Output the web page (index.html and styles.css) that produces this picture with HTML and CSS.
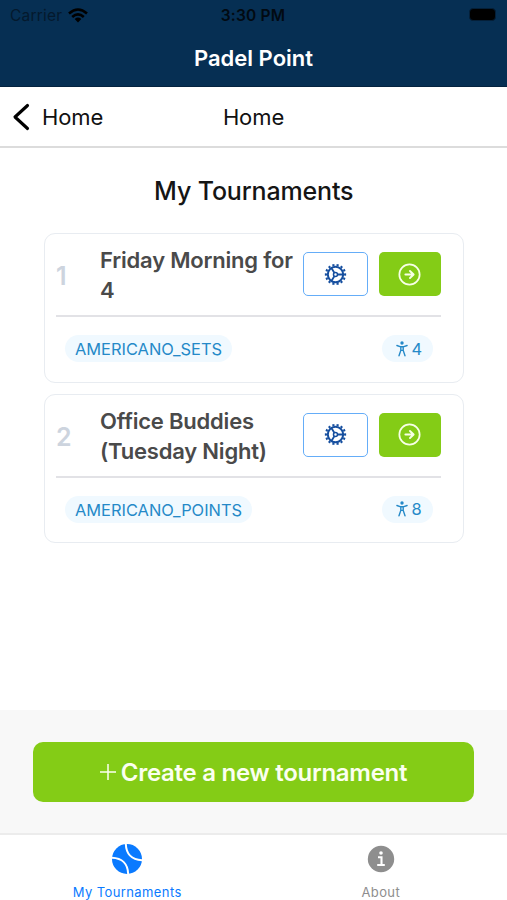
FILE: index.html
```
<!DOCTYPE html>
<html lang="en">
  <head>
    <meta charset="UTF-8" />
    <meta name="viewport" content="width=device-width, initial-scale=1.0" />
    <title>Padel Point</title>
    <link rel="stylesheet" href="styles.css">
  </head>

  <body>
    <svg class="symbols" aria-hidden="true">
      <symbol id="gear" viewBox="-12 -12 24 24">
        <g fill="none" stroke="currentColor">
          <circle r="8" stroke-width="2.1" />
          <circle r="10" stroke-width="2.2" pathLength="28" stroke-dasharray="1 1" stroke-dashoffset="0.5" />
          <circle r="2.1" stroke-width="1.6" />
          <path d="M2.2 0H8M-1.2 -1.9L-4.3 -6.8M-1.2 1.9L-4.3 6.8" stroke-width="1.9" />
        </g>
      </symbol>
      <symbol id="arrow" viewBox="0 0 24 24">
        <g fill="none" stroke="currentColor" stroke-linecap="round" stroke-linejoin="round">
          <circle cx="12" cy="12" r="10.6" stroke-width="1.8" />
          <path d="M7.7 12h8.2M12.5 8.3l3.8 3.7-3.8 3.7" stroke-width="2" />
        </g>
      </symbol>
      <symbol id="person" viewBox="0 0 12 16">
        <circle cx="6" cy="2" r="1.7" fill="currentColor" />
        <path d="M0.9 4.5L4.8 5.8V9.4L3 14.8M11.1 4.5L7.2 5.8V9.4L9 14.8M4.8 5.8H7.2M4.8 9.4H7.2" fill="none" stroke="currentColor" stroke-width="1.4" stroke-linecap="round" stroke-linejoin="round" />
      </symbol>
    </svg>

    <div class="app">
      <header class="header">
        <div class="status">
          <div class="carrier">
            <span>Carrier</span>
            <svg class="wifi" viewBox="0 0 20 15">
              <g fill="none" stroke="currentColor" stroke-width="2.6">
                <path d="M1 5.5Q10 -2.5 19 5.5" />
                <path d="M4.2 9Q10 3.8 15.8 9" />
              </g>
              <path d="M6.7 11Q10 8.2 13.3 11L10 14.5Z" fill="currentColor" />
            </svg>
          </div>
          <span class="time">3:30 PM</span>
          <div class="battery-wrap"><div class="battery"></div></div>
        </div>
        <div class="app-title">Padel Point</div>
      </header>

      <nav class="nav">
        <a class="back">
          <svg class="chevron" viewBox="0 0 18 28">
            <path d="M15.5 2.5L3 14l12.5 11.5" fill="none" stroke="currentColor" stroke-width="3.1" stroke-linecap="round" stroke-linejoin="round" />
          </svg>
          <span>Home</span>
        </a>
        <span class="nav-title">Home</span>
      </nav>

      <main class="main">
        <h1 class="heading">My Tournaments</h1>

        <div class="card">
          <div class="card-top">
            <span class="number">1</span>
            <h2 class="name">Friday Morning for 4</h2>
            <button class="btn btn-settings"><svg class="btn-icon"><use href="#gear" /></svg></button>
            <button class="btn btn-open"><svg class="btn-icon"><use href="#arrow" /></svg></button>
          </div>
          <div class="card-bottom">
            <span class="badge">AMERICANO_SETS</span>
            <span class="badge badge-players"><svg class="person"><use href="#person" /></svg>4</span>
          </div>
        </div>

        <div class="card">
          <div class="card-top">
            <span class="number">2</span>
            <h2 class="name">Office Buddies (Tuesday Night)</h2>
            <button class="btn btn-settings"><svg class="btn-icon"><use href="#gear" /></svg></button>
            <button class="btn btn-open"><svg class="btn-icon"><use href="#arrow" /></svg></button>
          </div>
          <div class="card-bottom">
            <span class="badge">AMERICANO_POINTS</span>
            <span class="badge badge-players"><svg class="person"><use href="#person" /></svg>8</span>
          </div>
        </div>
      </main>

      <div class="actions">
        <button class="create">
          <svg class="plus" viewBox="0 0 16 16">
            <path d="M8 0v16M0 8h16" stroke="currentColor" stroke-width="1.5" />
          </svg>
          <span>Create a new tournament</span>
        </button>
      </div>

      <div class="tabs">
        <a class="tab tab-active">
          <svg class="tab-icon" viewBox="0 0 30 30">
            <circle cx="15" cy="15" r="15" fill="currentColor" />
            <path d="M13.8 -1C13.8 9 19 16.2 31 16.2M-1 13.8C10 13.8 16.2 20 16.2 31" fill="none" stroke="#fff" stroke-width="2" />
          </svg>
          <span>My Tournaments</span>
        </a>
        <a class="tab">
          <svg class="tab-icon" viewBox="0 0 30 30">
            <circle cx="15" cy="15" r="13.2" fill="currentColor" />
            <circle cx="15" cy="9" r="1.8" fill="#fff" />
            <path d="M12 13.2h3.5v7.6M11.2 21h7.6" fill="none" stroke="#fff" stroke-width="2.1" />
          </svg>
          <span>About</span>
        </a>
      </div>
    </div>
  </body>
</html>
```
FILE: styles.css
```
* {
  box-sizing: border-box;
}
body {
  margin: 0;
  font-family: Inter, "Liberation Sans", sans-serif;
  background-color: white;
}
.symbols {
  display: none;
}
svg {
  display: block;
  flex-shrink: 0;
}
button {
  font-family: inherit;
  padding: 0;
  border: none;
}
.app {
  height: 900px;
  display: flex;
  flex-direction: column;
  overflow: hidden;
}

.header {
  height: 87px;
  flex-shrink: 0;
  background-color: #062f53;
  border-bottom: 1px solid #04233f;
}
.status {
  height: 29px;
  padding: 1px 11px 0 10px;
  display: grid;
  grid-template-columns: 1fr auto 1fr;
  align-items: center;
  font-size: 15.5px;
  color: #020a12;
}
.carrier {
  display: flex;
  align-items: center;
  gap: 6px;
  letter-spacing: 0.2px;
  color: #04192d;
}
.wifi {
  width: 20px;
  height: 15px;
  color: black;
}
.time {
  font-weight: 600;
  letter-spacing: 0.2px;
}
.battery-wrap {
  display: flex;
  justify-content: flex-end;
}
.battery {
  width: 27px;
  height: 13px;
  margin-top: -2px;
  border: 1px solid #041f38;
  border-radius: 4px;
  background-color: black;
}
.app-title {
  padding-top: 14px;
  line-height: 30px;
  text-align: center;
  font-size: 22px;
  font-weight: 600;
  color: white;
}

.nav {
  height: 61px;
  flex-shrink: 0;
  display: grid;
  grid-template-columns: 1fr auto 1fr;
  align-items: center;
  padding: 0 12px;
  border-bottom: 2px solid #dcdcdc;
  font-size: 22px;
  letter-spacing: -0.1px;
  color: #111;
}
.back {
  display: flex;
  align-items: center;
  gap: 12px;
}
.chevron {
  width: 18px;
  height: 28px;
  color: black;
}

.main {
  flex: 1;
  padding: 27px 43.5px 0 44px;
}
.heading {
  margin: 0 0 26px;
  line-height: 32px;
  text-align: center;
  font-size: 25px;
  font-weight: 500;
  letter-spacing: -0.15px;
  color: #151515;
}
.card {
  height: 149.5px;
  margin-bottom: 11px;
  padding: 12px 22px 0 11px;
  border: 1.5px solid #e8ecf1;
  border-radius: 11px;
}
.card-top {
  height: 71px;
  display: flex;
  border-bottom: 2px solid #e2e2e6;
}
.number {
  width: 44px;
  padding-top: 14px;
  line-height: 32px;
  font-size: 25px;
  font-weight: 600;
  color: #cdd4de;
}
.name {
  flex: 1;
  margin: -1px 0 0;
  line-height: 30px;
  font-size: 22px;
  font-weight: 600;
  letter-spacing: -0.2px;
  color: #4a4a4a;
}
.btn {
  height: 44px;
  margin-top: 6px;
  display: flex;
  justify-content: center;
  align-items: center;
  border-radius: 5px;
}
.btn-settings {
  width: 65px;
  margin-right: 11px;
  border: 1.5px solid #65adf8;
  background-color: white;
  color: #164f9f;
}
.btn-open {
  width: 62px;
  background-color: #84cc16;
  color: #f7ffe5;
}
.btn-icon {
  width: 23px;
  height: 23px;
}
.card-bottom {
  padding: 18px 8px 0 9px;
  display: flex;
  justify-content: space-between;
}
.badge {
  height: 27px;
  padding: 0 10px;
  line-height: 28px;
  border-radius: 14px;
  font-size: 16.4px;
  background-color: #f0f9ff;
  color: #2589c8;
}
.badge-players {
  width: 51px;
  padding: 0 0 0 14px;
  display: flex;
  align-items: center;
  gap: 4px;
}
.person {
  width: 12px;
  height: 16px;
}

.actions {
  height: 125px;
  flex-shrink: 0;
  padding: 32px 33px 0;
  background-color: #f8f8f8;
  border-bottom: 2px solid #ececec;
}
.create {
  width: 441px;
  height: 60px;
  display: flex;
  justify-content: center;
  align-items: center;
  gap: 5px;
  border-radius: 10px;
  font-size: 24px;
  font-weight: 600;
  letter-spacing: -0.27px;
  background-color: #84cc16;
  color: #fbfff0;
}
.plus {
  width: 16px;
  height: 16px;
}

.tabs {
  height: 65px;
  flex-shrink: 0;
  display: flex;
}
.tab {
  flex: 1;
  padding: 9px 0 0 1px;
  display: flex;
  flex-direction: column;
  align-items: center;
  gap: 9px;
  line-height: 18px;
  font-size: 13px;
  letter-spacing: 0.4px;
  color: #8e8e8e;
}
.tab-active {
  color: #0a7aff;
}
.tab-icon {
  width: 30px;
  height: 30px;
}
```
